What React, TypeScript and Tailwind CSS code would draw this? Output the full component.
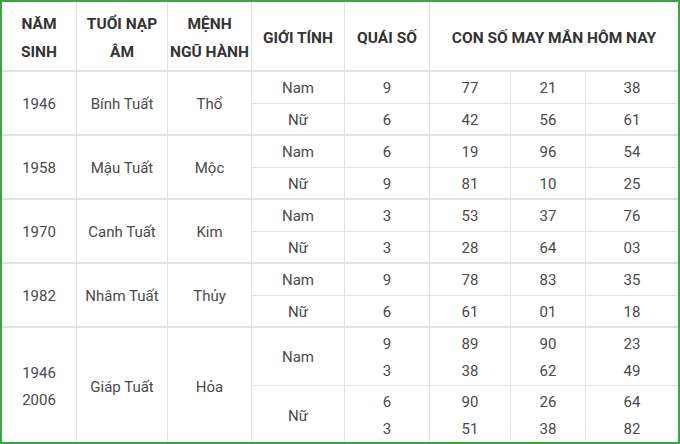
import React from "react";

type Sub = { gender: string; qs: string[]; nums: string[][] };
type Group = { years: string[]; tuoi: string; menh: string; subs: Sub[]; h: string };

const groups: Group[] = [
  {
    years: ["1946"],
    tuoi: "Bính Tuất",
    menh: "Thổ",
    h: "h-[32px]",
    subs: [
      { gender: "Nam", qs: ["9"], nums: [["77", "21", "38"]] },
      { gender: "Nữ", qs: ["6"], nums: [["42", "56", "61"]] },
    ],
  },
  {
    years: ["1958"],
    tuoi: "Mậu Tuất",
    menh: "Mộc",
    h: "h-[32px]",
    subs: [
      { gender: "Nam", qs: ["6"], nums: [["19", "96", "54"]] },
      { gender: "Nữ", qs: ["9"], nums: [["81", "10", "25"]] },
    ],
  },
  {
    years: ["1970"],
    tuoi: "Canh Tuất",
    menh: "Kim",
    h: "h-[32px]",
    subs: [
      { gender: "Nam", qs: ["3"], nums: [["53", "37", "76"]] },
      { gender: "Nữ", qs: ["3"], nums: [["28", "64", "03"]] },
    ],
  },
  {
    years: ["1982"],
    tuoi: "Nhâm Tuất",
    menh: "Thủy",
    h: "h-[32px]",
    subs: [
      { gender: "Nam", qs: ["9"], nums: [["78", "83", "35"]] },
      { gender: "Nữ", qs: ["6"], nums: [["61", "01", "18"]] },
    ],
  },
  {
    years: ["1946", "2006"],
    tuoi: "Giáp Tuất",
    menh: "Hỏa",
    h: "h-[58px]",
    subs: [
      { gender: "Nam", qs: ["9", "3"], nums: [["89", "90", "23"], ["38", "62", "49"]] },
      { gender: "Nữ", qs: ["6", "3"], nums: [["90", "26", "64"], ["51", "38", "82"]] },
    ],
  },
];

const cell = "border-r border-[#e2e2e2] text-center align-middle p-0 pt-[2px]";
const th =
  "border-r border-b-2 border-[#e2e2e2] text-center align-middle p-0 pt-[3px] font-bold text-[15.5px] text-[#333] leading-[28px]";

function Lines({ items }: { items: string[] }) {
  return (
    <div className="leading-[27px]">
      {items.map((t, i) => (
        <div key={i}>{t}</div>
      ))}
    </div>
  );
}

export default function App() {
  return (
    <div className="w-[680px] h-[444px] bg-white border-2 border-[#36a83a] overflow-hidden font-['Roboto',sans-serif] text-[15px] text-[#4a4a4a]">
      <table className="table-fixed border-separate border-spacing-0 w-[676px]">
        <colgroup>
          <col className="w-[75px]" />
          <col className="w-[91px]" />
          <col className="w-[84px]" />
          <col className="w-[93px]" />
          <col className="w-[85px]" />
          <col className="w-[81px]" />
          <col className="w-[75px]" />
          <col className="w-[92px]" />
        </colgroup>
        <thead>
          <tr className="h-[70px]">
            <th className={th}>
              NĂM
              <br />
              SINH
            </th>
            <th className={th}>
              TUỔI NẠP
              <br />
              ÂM
            </th>
            <th className={th}>
              MỆNH
              <br />
              NGŨ HÀNH
            </th>
            <th className={`${th} whitespace-nowrap`}>GIỚI TÍNH</th>
            <th className={`${th} whitespace-nowrap`}>QUÁI SỐ</th>
            <th className={`${th} border-r-0 whitespace-nowrap`} colSpan={3}>
              CON SỐ MAY MẮN HÔM NAY
            </th>
          </tr>
        </thead>
        <tbody>
          {groups.map((g, gi) => {
            const last = gi === groups.length - 1;
            const groupB = last ? "" : "border-b-2";
            return g.subs.map((s, si) => {
              const subB = si === 0 ? "border-b" : groupB;
              return (
                <tr key={`${gi}-${si}`} className={g.h}>
                  {si === 0 && (
                    <>
                      <td rowSpan={2} className={`${cell} ${groupB}`}>
                        <Lines items={g.years} />
                      </td>
                      <td rowSpan={2} className={`${cell} ${groupB}`}>
                        {g.tuoi}
                      </td>
                      <td rowSpan={2} className={`${cell} ${groupB}`}>
                        {g.menh}
                      </td>
                    </>
                  )}
                  <td className={`${cell} ${subB}`}>{s.gender}</td>
                  <td className={`${cell} ${subB}`}>
                    <Lines items={s.qs} />
                  </td>
                  {[0, 1, 2].map((c) => (
                    <td key={c} className={`${cell} ${subB} ${c === 2 ? "border-r-0" : ""}`}>
                      <Lines items={s.nums.map((row) => row[c])} />
                    </td>
                  ))}
                </tr>
              );
            });
          })}
        </tbody>
      </table>
    </div>
  );
}
